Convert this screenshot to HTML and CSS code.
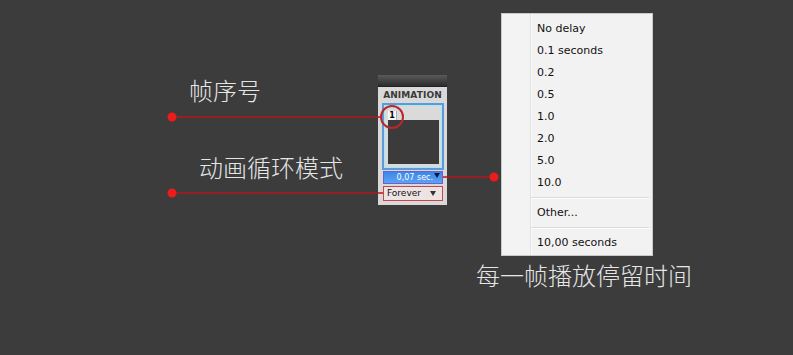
FILE: index.html
```html
<!DOCTYPE html>
<html lang="zh">

<head>
    <meta charset="UTF-8">
    <title>Animation</title>
    <link rel="stylesheet" href="styles.css">
</head>

<body>
    <div class="canvas">
        <div class="note note-frame">帧序号</div>
        <div class="note note-loop">动画循环模式</div>
        <div class="note note-delay">每一帧播放停留时间</div>

        <div class="panel">
            <div class="panel-bar"></div>
            <div class="panel-title">ANIMATION</div>
            <div class="frames">
                <div class="frame">
                    <span class="frame-num">1</span>
                    <div class="thumb"></div>
                </div>
            </div>
            <div class="delay">0,07 sec.<span class="delay-arrow"></span></div>
            <div class="loop">Forever<span class="loop-arrow"></span></div>
        </div>

        <div class="menu">
            <div class="menu-item">No delay</div>
            <div class="menu-item">0.1 seconds</div>
            <div class="menu-item">0.2</div>
            <div class="menu-item">0.5</div>
            <div class="menu-item">1.0</div>
            <div class="menu-item">2.0</div>
            <div class="menu-item">5.0</div>
            <div class="menu-item">10.0</div>
            <div class="menu-sep"></div>
            <div class="menu-item">Other...</div>
            <div class="menu-sep"></div>
            <div class="menu-item">10,00 seconds</div>
        </div>

        <svg class="marks" width="793" height="355">
            <line x1="172" y1="117" x2="381" y2="117" stroke="#b3171b" stroke-width="1.5" />
            <line x1="172" y1="193" x2="383" y2="193" stroke="#b3171b" stroke-width="1.5" />
            <line x1="443" y1="177" x2="494" y2="177" stroke="#b3171b" stroke-width="1.5" />
            <circle cx="172" cy="117" r="4.5" fill="#ec1c1c" />
            <circle cx="172" cy="193" r="4.5" fill="#ec1c1c" />
            <circle cx="494" cy="177" r="4.5" fill="#ec1c1c" />
            <circle cx="392" cy="117" r="11" fill="none" stroke="#b8282c" stroke-width="2" />
        </svg>
    </div>
</body>

</html>
```

FILE: styles.css
```css
body {
    margin: 0;
    padding: 0;
    background-color: #3c3c3c;
}

.canvas {
    position: relative;
    width: 793px;
    height: 355px;
    background-color: #3c3c3c;
    overflow: hidden;
}

.note {
    position: absolute;
    color: #e6e6e6;
    font-family: "Noto Sans CJK SC", sans-serif;
    font-weight: 300;
    font-size: 24px;
    line-height: 1;
    white-space: nowrap;
}

.note-frame {
    left: 189px;
    top: 78px;
}

.note-loop {
    left: 199px;
    top: 155px;
}

.note-delay {
    left: 476px;
    top: 263px;
}

.panel {
    position: absolute;
    left: 378px;
    top: 75px;
    width: 69px;
    height: 130px;
    background-color: #d9d9d9;
    font-family: "DejaVu Sans", sans-serif;
    box-sizing: border-box;
    padding-bottom: 5px;
}

.panel-bar {
    height: 11px;
    background: linear-gradient(#5a5a5a, #2c2c2c);
    border-bottom: 1px solid #222;
}

.panel-title {
    height: 16px;
    line-height: 16px;
    font-size: 9px;
    font-weight: bold;
    letter-spacing: 0.1px;
    color: #3a3a3a;
    text-align: center;
}

.frames {
    margin: 0 3px 0 4px;
    padding: 2px;
    background-color: #5c9ad8;
    height: 63px;
}

.frame {
    position: relative;
    border: 1px solid #a9e6f6;
    background-color: #dadada;
    padding: 14px 2px 3px 3px;
    box-sizing: border-box;
    height: 63px;
}

.frame-num {
    position: absolute;
    left: 3px;
    top: 5px;
    width: 8px;
    height: 9px;
    background-color: #f6f6f6;
    border-right: 1px solid #b0b0b0;
    font-size: 8px;
    font-weight: bold;
    line-height: 9px;
    text-align: center;
    color: #000;
}

.thumb {
    height: 44px;
    background-color: #3b3b3b;
}

.delay {
    position: relative;
    margin: 1px 4px 0 5px;
    height: 11px;
    border: 1px solid #6c5fd0;
    background: linear-gradient(#3a86ea, #5ea2f0);
    color: #fff;
    font-size: 8px;
    line-height: 11px;
    text-align: right;
    padding-right: 9px;
}

.delay-arrow {
    position: absolute;
    right: 2px;
    top: 1px;
    border-left: 3px solid transparent;
    border-right: 3px solid transparent;
    border-top: 5px solid #101840;
}

.loop {
    position: relative;
    margin: 2px 4px 0 5px;
    height: 13px;
    border: 1px solid #c8464a;
    background-color: #eee3e3;
    color: #111;
    font-size: 9px;
    line-height: 13px;
    padding-left: 3px;
}

.loop-arrow {
    position: absolute;
    right: 6px;
    top: 4px;
    border-left: 3px solid transparent;
    border-right: 3px solid transparent;
    border-top: 5px solid #333;
}

.menu {
    position: absolute;
    left: 501px;
    top: 13px;
    width: 152px;
    height: 243px;
    box-sizing: border-box;
    padding: 4px 0 3px 0;
    background: linear-gradient(to right, #f3f3f3 28px, #e2e2e2 28px, #e2e2e2 29px, #fafafa 29px, #fafafa 30px, #f2f2f2 30px);
    border: 1px solid #c9c9c9;
    font-family: "DejaVu Sans", sans-serif;
    font-size: 11px;
    color: #111;
}

.menu-item {
    height: 22px;
    line-height: 22px;
    padding-left: 35px;
}

.menu-sep {
    height: 8px;
    margin-left: 29px;
    margin-right: 3px;
    background: linear-gradient(transparent 3px, #dadada 3px, #dadada 4px, #fff 4px, #fff 5px, transparent 5px);
}

.marks {
    position: absolute;
    left: 0;
    top: 0;
    pointer-events: none;
}
```
